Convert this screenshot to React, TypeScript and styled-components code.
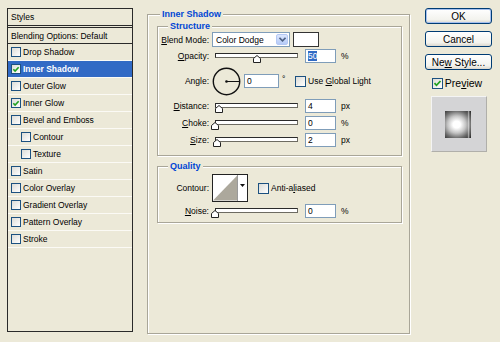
import React from 'react';
import styled, { createGlobalStyle } from 'styled-components';

const GlobalStyle = createGlobalStyle`
  html, body {
    margin: 0;
    padding: 0;
    background: #ECE9D8;
  }
  body {
    font-family: "Liberation Sans", Arial, sans-serif;
    font-size: 8.5px;
    color: #000;
  }
`;

const Window = styled.div`
  display: flex;
  align-items: flex-start;
  width: 500px;
  height: 342px;
  box-sizing: border-box;
  padding: 8px 0 0 7px;
  background: #ECE9D8;
  overflow: hidden;
`;

/* ---------- left styles list ---------- */

const StylesPanel = styled.div`
  width: 126px;
  height: 324px;
  box-sizing: border-box;
  border: 1px solid #2a2a2a;
  display: flex;
  flex-direction: column;
`;

const PanelHead = styled.div`
  height: 16px;
  padding-left: 3px;
  display: flex;
  align-items: center;
  border-bottom: 3px double #2a2a2a;
`;

const BlendRow = styled.div`
  height: 15px;
  padding-left: 3px;
  display: flex;
  align-items: center;
  border-bottom: 1px solid #2a2a2a;
`;

const EffectRow = styled.div<{ $selected?: boolean; $sub?: boolean }>`
  height: 16px;
  display: flex;
  align-items: center;
  gap: 2px;
  padding-left: ${(p) => (p.$sub ? 13 : 3)}px;
  border-bottom: 1px solid #fbfaf5;
  background: ${(p) => (p.$selected ? '#316AC5' : 'transparent')};
  color: ${(p) => (p.$selected ? '#fff' : '#000')};
  font-weight: ${(p) => (p.$selected ? 'bold' : 'normal')};
`;

const Box = styled.span<{ $size?: number }>`
  width: ${(p) => p.$size ?? 11}px;
  height: ${(p) => p.$size ?? 11}px;
  box-sizing: border-box;
  border: 1px solid #1c5180;
  background: linear-gradient(135deg, #dcdcd7, #ffffff);
  display: inline-flex;
  align-items: center;
  justify-content: center;
  flex: none;
`;

const Check = ({ checked, size }: { checked?: boolean; size?: number }) => (
  <Box $size={size}>
    {checked && (
      <svg width="9" height="9" viewBox="0 0 9 9">
        <path d="M1.5 4.2 L3.5 6.3 L7.5 2" fill="none" stroke="#21a121" strokeWidth="1.8" />
      </svg>
    )}
  </Box>
);

const U = styled.span`
  text-decoration: underline;
`;

/* ---------- group boxes ---------- */

const Group = styled.fieldset<{ $pad: string; $w?: number; $h?: number; $mt?: number }>`
  margin: ${(p) => p.$mt ?? 0}px 0 0 0;
  min-width: 0;
  box-sizing: border-box;
  width: ${(p) => (p.$w ? `${p.$w}px` : 'auto')};
  height: ${(p) => (p.$h ? `${p.$h}px` : 'auto')};
  padding: ${(p) => p.$pad};
  border: 1px solid #a9a698;
  box-shadow: inset 1px 1px 0 #fff, 1px 1px 0 #fff;
`;

const Legend = styled.legend<{ $ml: number }>`
  margin-left: ${(p) => p.$ml}px;
  padding: 0 2px;
  background: #ECE9D8;
  color: #0046d5;
  font-weight: bold;
  font-size: 9px;
  line-height: 12px;
`;

const MainCol = styled.div`
  margin-left: 14px;
`;

const Row = styled.div<{ $h: number; $mt: number }>`
  display: flex;
  align-items: center;
  gap: 3px;
  height: ${(p) => p.$h}px;
  margin-top: ${(p) => p.$mt}px;
`;

const Label = styled.span`
  width: 51px;
  text-align: right;
  flex: none;
`;

const Select = styled.div`
  width: 78px;
  height: 15px;
  box-sizing: border-box;
  border: 1px solid #7f9db9;
  background: #fff;
  display: flex;
  align-items: center;
  justify-content: space-between;
  padding: 0 1px 0 3px;
`;

const ComboBtn = styled.span`
  width: 12px;
  height: 11px;
  box-sizing: border-box;
  border: 1px solid #b4c8f5;
  border-radius: 2px;
  background: linear-gradient(#dbe6fd, #b6cbf8);
  display: flex;
  align-items: center;
  justify-content: center;
`;

const Swatch = styled.span`
  width: 26px;
  height: 15px;
  box-sizing: border-box;
  border: 1px solid #333;
  background: #fff;
`;

const Field = styled.div<{ $w?: number }>`
  width: ${(p) => p.$w ?? 31}px;
  height: 14px;
  box-sizing: border-box;
  border: 1px solid #7f9db9;
  background: #fff;
  display: flex;
  align-items: center;
  padding-left: 2px;
  flex: none;
`;

const Selected = styled.span`
  background: #316ac5;
  color: #fff;
`;

const Unit = styled.span`
  margin-left: 2px;
`;

const SliderWrap = styled.div`
  position: relative;
  width: 89px;
  height: 14px;
  flex: none;
  margin-right: 1px;
`;

const Track = styled.div`
  position: absolute;
  left: 3px;
  right: 3px;
  top: 4px;
  height: 5px;
  box-sizing: border-box;
  border: 1px solid #2b2b2b;
  border-right-color: #6d6b62;
  border-bottom-color: #6d6b62;
  background: #fff;
`;

const Thumb = styled.svg`
  position: absolute;
  top: 6px;
`;

const Slider = ({ pos }: { pos: number }) => (
  <SliderWrap>
    <Track />
    <Thumb width="8" height="8" viewBox="0 0 8 8" style={{ left: 3 + pos * 83 - 4 }}>
      <path d="M0.5 7.5 V3.5 L4 0.5 L7.5 3.5 V7.5 Z" fill="#fff" stroke="#222" strokeWidth="1" />
    </Thumb>
  </SliderWrap>
);

const Degree = styled.span`
  align-self: flex-start;
  margin-top: 8px;
  width: 8px;
`;

const CheckLabel = styled.label<{ $ml?: number }>`
  display: flex;
  align-items: center;
  gap: 2px;
  margin-left: ${(p) => p.$ml ?? 0}px;
`;

const ContourBox = styled.div`
  width: 36px;
  height: 28px;
  box-sizing: border-box;
  border: 1px solid #222;
  background: #fff;
  display: flex;
`;

const ContourArrow = styled.div`
  width: 10px;
  border-left: 1px solid #999;
  display: flex;
  justify-content: center;
  padding-top: 9px;
  box-sizing: border-box;
`;

/* ---------- right column ---------- */

const Side = styled.div`
  margin-left: 15px;
  width: 67px;
  display: flex;
  flex-direction: column;
  align-items: center;
  gap: 7px;
`;

const Button = styled.div<{ $default?: boolean }>`
  width: 67px;
  height: 16px;
  box-sizing: border-box;
  border: 1px solid #003c74;
  border-radius: 3px;
  background: linear-gradient(#ffffff, #f3f3ee 75%, #dcd8ce);
  box-shadow: ${(p) => (p.$default ? 'inset 0 0 0 1px #a6c0ee' : 'none')};
  font-size: 10px;
  display: flex;
  align-items: center;
  justify-content: center;
`;

const PreviewLabel = styled.label`
  display: flex;
  align-items: center;
  gap: 2px;
  height: 12px;
  font-size: 10.5px;
  padding-right: 3px;
`;

const PreviewBox = styled.div`
  width: 56px;
  height: 56px;
  box-sizing: border-box;
  background: #d4d4d6;
  border: 1px solid;
  border-color: #f4f4f4 #b0afaa #b0afaa #f4f4f4;
  display: flex;
  align-items: center;
  justify-content: center;
`;

const PreviewSwatch = styled.div`
  width: 26px;
  height: 27px;
  margin-right: 1px;
  background:
    linear-gradient(90deg, transparent 86%, rgba(255, 255, 255, 0.5) 90%, transparent 96%),
    radial-gradient(farthest-corner at 45% 50%, #fff 0%, #fff 18%, #c4c4c4 45%, #6a6a6a 72%, #262626 100%);
`;

const effects = [
  { name: 'Drop Shadow' },
  { name: 'Inner Shadow', checked: true, selected: true },
  { name: 'Outer Glow' },
  { name: 'Inner Glow', checked: true },
  { name: 'Bevel and Emboss' },
  { name: 'Contour', sub: true },
  { name: 'Texture', sub: true },
  { name: 'Satin' },
  { name: 'Color Overlay' },
  { name: 'Gradient Overlay' },
  { name: 'Pattern Overlay' },
  { name: 'Stroke' },
];

export default function App() {
  return (
    <>
      <GlobalStyle />
      <Window>
        <StylesPanel>
          <PanelHead>Styles</PanelHead>
          <BlendRow>Blending Options: Default</BlendRow>
          {effects.map((e) => (
            <EffectRow key={e.name} $selected={e.selected} $sub={e.sub}>
              <Check checked={e.checked} size={10} />
              <span>{e.name}</span>
            </EffectRow>
          ))}
        </StylesPanel>

        <MainCol>
          <Group $pad="0 7px 0 9px" $w={263} $h={326}>
            <Legend $ml={3}>Inner Shadow</Legend>

            <Group $pad="0 0 8px 0">
              <Legend $ml={10}>Structure</Legend>
              <Row $h={15} $mt={0}>
                <Label>
                  <U>B</U>lend Mode:
                </Label>
                <Select>
                  Color Dodge
                  <ComboBtn>
                    <svg width="7" height="5" viewBox="0 0 7 5">
                      <path d="M0.5 0.8 L3.5 3.8 L6.5 0.8" fill="none" stroke="#4d6185" strokeWidth="1.6" />
                    </svg>
                  </ComboBtn>
                </Select>
                <Swatch />
              </Row>
              <Row $h={14} $mt={2}>
                <Label>
                  <U>O</U>pacity:
                </Label>
                <Slider pos={0.5} />
                <Field>
                  <Selected>50</Selected>
                </Field>
                <Unit>%</Unit>
              </Row>
              <Row $h={30} $mt={3}>
                <Label>Angle:</Label>
                <svg width="29" height="29" viewBox="0 0 29 29">
                  <circle cx="14.5" cy="14.5" r="13.2" fill="none" stroke="#111" strokeWidth="1.4" />
                  <line x1="14.5" y1="14.5" x2="27.5" y2="14.5" stroke="#111" strokeWidth="1" />
                  <circle cx="14.5" cy="14.5" r="1.3" fill="#111" />
                </svg>
                <Field $w={35}>0</Field>
                <Degree>°</Degree>
                <CheckLabel $ml={2}>
                  <Check />
                  <span>
                    Use <U>G</U>lobal Light
                  </span>
                </CheckLabel>
              </Row>
              <Row $h={14} $mt={3}>
                <Label>
                  <U>D</U>istance:
                </Label>
                <Slider pos={0.045} />
                <Field>4</Field>
                <Unit>px</Unit>
              </Row>
              <Row $h={14} $mt={3}>
                <Label>
                  <U>C</U>hoke:
                </Label>
                <Slider pos={0} />
                <Field>0</Field>
                <Unit>%</Unit>
              </Row>
              <Row $h={14} $mt={3}>
                <Label>
                  <U>S</U>ize:
                </Label>
                <Slider pos={0.02} />
                <Field>2</Field>
                <Unit>px</Unit>
              </Row>
            </Group>

            <Group $pad="0 0 4px 0" $mt={4}>
              <Legend $ml={10}>Quality</Legend>
              <Row $h={28} $mt={2}>
                <Label>Contour:</Label>
                <ContourBox>
                  <svg width="25" height="26" viewBox="0 0 25 26">
                    <path d="M0 26 L25 0 L25 26 Z" fill="#aca89c" />
                  </svg>
                  <ContourArrow>
                    <svg width="5" height="3" viewBox="0 0 5 3">
                      <path d="M0 0 H5 L2.5 3 Z" fill="#111" />
                    </svg>
                  </ContourArrow>
                </ContourBox>
                <CheckLabel $ml={7}>
                  <Check />
                  <span>
                    Anti-a<U>l</U>iased
                  </span>
                </CheckLabel>
              </Row>
              <Row $h={14} $mt={2}>
                <Label>
                  <U>N</U>oise:
                </Label>
                <Slider pos={0} />
                <Field>0</Field>
                <Unit>%</Unit>
              </Row>
            </Group>
          </Group>
        </MainCol>

        <Side>
          <Button $default>OK</Button>
          <Button>Cancel</Button>
          <Button>
            <span>
              Ne<U>w</U> Style...
            </span>
          </Button>
          <PreviewLabel>
            <Check checked />
            <span>
              Pre<U>v</U>iew
            </span>
          </PreviewLabel>
          <PreviewBox>
            <PreviewSwatch />
          </PreviewBox>
        </Side>
      </Window>
    </>
  );
}
